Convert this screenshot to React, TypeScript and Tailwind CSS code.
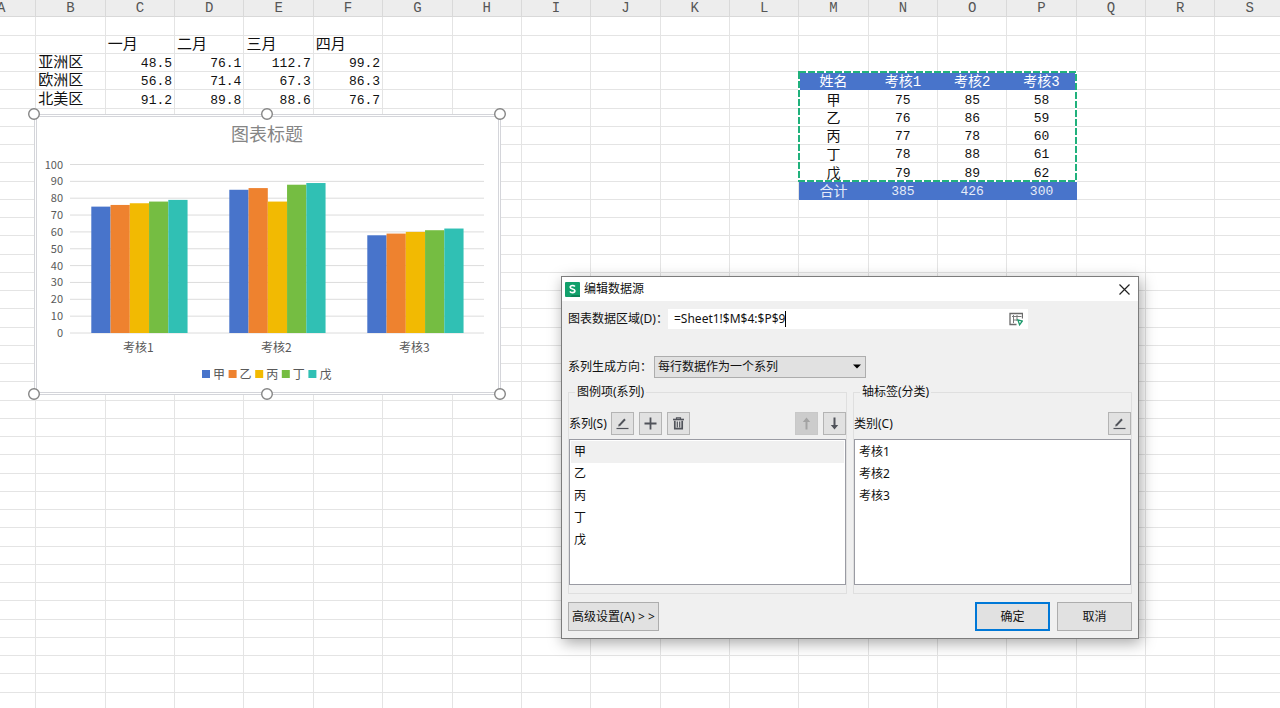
import React from "react";

const COLS = "ABCDEFGHIJKLMNOPQRS".split("");
const ROW_COUNT = 38;

type Kind = "label" | "number" | "head" | "name" | "body" | "totalName" | "total";
type Cell = { text: string; kind: Kind };

const sheet: Record<string, Cell> = {};

function fill(row: number, start: string, texts: string[], kinds: Kind[]) {
  const first = COLS.indexOf(start);
  texts.forEach((text, i) => {
    sheet[COLS[first + i] + row] = { text, kind: kinds[Math.min(i, kinds.length - 1)] };
  });
}

fill(2, "C", ["一月", "二月", "三月", "四月"], ["label"]);
fill(3, "B", ["亚洲区", "48.5", "76.1", "112.7", "99.2"], ["label", "number"]);
fill(4, "B", ["欧洲区", "56.8", "71.4", "67.3", "86.3"], ["label", "number"]);
fill(5, "B", ["北美区", "91.2", "89.8", "88.6", "76.7"], ["label", "number"]);
fill(4, "M", ["姓名", "考核1", "考核2", "考核3"], ["head"]);
fill(5, "M", ["甲", "75", "85", "58"], ["name", "body"]);
fill(6, "M", ["乙", "76", "86", "59"], ["name", "body"]);
fill(7, "M", ["丙", "77", "78", "60"], ["name", "body"]);
fill(8, "M", ["丁", "78", "88", "61"], ["name", "body"]);
fill(9, "M", ["戊", "79", "89", "62"], ["name", "body"]);
fill(10, "M", ["合计", "385", "426", "300"], ["totalName", "total"]);

const cellStyle: Record<Kind, string> = {
  label: "border-[#e4e4e4] pl-[2px] text-left text-[15px] text-[#111]",
  number: "border-[#e4e4e4] pr-[2px] text-right text-[13px] text-[#111]",
  head: "border-[#4874cb] bg-[#4874cb] text-center text-[14px] text-white",
  name: "border-[#e4e4e4] text-center text-[14px] text-[#111]",
  body: "border-[#e4e4e4] text-center text-[13px] text-[#111]",
  totalName: "border-[#4874cb] bg-[#4874cb] text-center text-[14px] text-[#e6ecf8]",
  total: "border-[#4874cb] bg-[#4874cb] text-center text-[13px] text-[#e6ecf8]",
};

function Sheet() {
  return (
    <table className="-ml-[33px] w-[calc(100%+38px)] table-fixed border-separate border-spacing-0 font-['Liberation_Mono','Noto_Sans_CJK_SC',monospace]">
      <thead>
        <tr className="h-[17px]">
          {COLS.map((c) => (
            <th
              key={c}
              scope="col"
              className="border-r border-b border-[#d9d9d9] bg-[#ededed] p-0 text-center text-[14px] leading-[16px] font-normal text-[#555]"
            >
              {c}
            </th>
          ))}
        </tr>
      </thead>
      <tbody>
        {Array.from({ length: ROW_COUNT }, (_, i) => i + 1).map((row) => (
          <tr key={row} className={row % 4 === 1 ? "h-[19px]" : "h-[18px]"}>
            {COLS.map((c) => {
              const cell = sheet[c + row];
              return (
                <td
                  key={c}
                  className={
                    "overflow-hidden border-r border-b p-0 pt-[3px] leading-[14px] whitespace-nowrap " +
                    (cell ? cellStyle[cell.kind] : "border-[#e4e4e4]")
                  }
                >
                  {cell?.text}
                </td>
              );
            })}
          </tr>
        ))}
      </tbody>
    </table>
  );
}

const series = [
  { name: "甲", color: "#4874cb", values: [75, 85, 58] },
  { name: "乙", color: "#ee822f", values: [76, 86, 59] },
  { name: "丙", color: "#f2ba02", values: [77, 78, 60] },
  { name: "丁", color: "#75bd42", values: [78, 88, 61] },
  { name: "戊", color: "#30c0b4", values: [79, 89, 62] },
];
const categories = ["考核1", "考核2", "考核3"];
const ticks = [0, 10, 20, 30, 40, 50, 60, 70, 80, 90, 100];

const BASE = 219;
const UNIT = 1.685;
const BAR = 19.25;

function Chart() {
  return (
    <figure className="absolute top-[114px] left-[34px] h-[281px] w-[467px] border-[3px] border-double border-[#d4d5da] bg-white">
      <svg
        viewBox="0 0 467 281"
        className="absolute -top-[3px] -left-[3px] h-[281px] w-[467px] overflow-visible font-['Noto_Sans_CJK_SC',sans-serif]"
        role="img"
        aria-label="图表标题"
      >
        <text x="233" y="27" textAnchor="middle" className="fill-[#858585] text-[18px]">
          图表标题
        </text>
        {ticks.map((t) => (
          <g key={t}>
            <line x1="36" x2="450" y1={BASE - t * UNIT} y2={BASE - t * UNIT} stroke="#dcdcdc" />
            <text x="29" y={BASE - t * UNIT + 4} textAnchor="end" className="fill-[#595959] text-[11px]">
              {t}
            </text>
          </g>
        ))}
        {categories.map((c, g) => {
          const left = 57.3 + g * 138;
          return (
            <g key={c}>
              {series.map((s, i) => (
                <rect
                  key={s.name}
                  x={left + i * BAR}
                  y={BASE - s.values[g] * UNIT}
                  width={BAR}
                  height={s.values[g] * UNIT}
                  fill={s.color}
                />
              ))}
              <text x={left + 47} y="238" textAnchor="middle" className="fill-[#595959] text-[12px]">
                {c}
              </text>
            </g>
          );
        })}
        {series.map((s, i) => (
          <g key={s.name}>
            <rect x={168 + i * 26.6} y="256" width="8" height="8" fill={s.color} />
            <text x={179 + i * 26.6} y="265" className="fill-[#595959] text-[12px]">
              {s.name}
            </text>
          </g>
        ))}
        {[0, 1].map((r) =>
          [0, 1, 2].map((c) => (
            <circle
              key={`${r}-${c}`}
              cx={c * 233}
              cy={r * 280}
              r="5.3"
              fill="#fff"
              stroke="#858585"
              strokeWidth="1.4"
            />
          )),
        )}
      </svg>
    </figure>
  );
}

function CopyOutline() {
  return (
    <svg className="absolute top-[71px] left-[798px] h-[111px] w-[279px]" viewBox="0 0 279 111" aria-hidden="true">
      <rect x="1" y="1" width="277" height="109" fill="none" stroke="#fff" strokeWidth="2" />
      <rect x="1" y="1" width="277" height="109" fill="none" stroke="#21b17c" strokeWidth="2" strokeDasharray="7 2" />
    </svg>
  );
}

function ToolButton(props: { label: string; disabled?: boolean; children: React.ReactNode }) {
  return (
    <button
      type="button"
      aria-label={props.label}
      disabled={props.disabled}
      className="flex size-[23px] items-center justify-center border border-[#b4b4b4] bg-[#e1e1e1] text-[#50535a] disabled:border-[#c8c8c8] disabled:bg-[#cccccc] disabled:text-[#a3a3a3]"
    >
      {props.children}
    </button>
  );
}

function PencilIcon() {
  return (
    <svg viewBox="0 0 13 13" className="size-[13px]" aria-hidden="true">
      <path d="M0.5 11.500h12" stroke="currentColor" strokeWidth="1.200" />
      <path d="M3.300 8.400 9 2.300" stroke="currentColor" strokeWidth="2" />
      <path d="M2.200 9.600 2.700 7.300 4.400 8.900Z" fill="currentColor" />
    </svg>
  );
}

function ArrowIcon({ up }: { up?: boolean }) {
  return (
    <svg viewBox="0 0 13 13" className="size-[13px]" aria-hidden="true">
      {up ? (
        <path d="M6.5 0.5 10.200 5H7.500v7.500h-2V5H2.800Z" fill="currentColor" />
      ) : (
        <path d="M6.5 12.5 10.200 8H7.500V0.5h-2V8H2.800Z" fill="currentColor" />
      )}
    </svg>
  );
}

function ListBox({ labelledBy, items, selected }: { labelledBy: string; items: string[]; selected?: number }) {
  return (
    <ul
      role="listbox"
      aria-labelledby={labelledBy}
      className="mt-[4px] mb-[8px] flex-1 border border-[#9a9ba3] bg-white p-px"
    >
      {items.map((item, i) => (
        <li
          key={item}
          role="option"
          aria-selected={i === selected}
          className="h-[22px] px-[3px] leading-[22px] aria-selected:bg-[#f0f0f0]"
        >
          {item}
        </li>
      ))}
    </ul>
  );
}

function Dialog() {
  return (
    <section
      role="dialog"
      aria-labelledby="dialog-title"
      className="absolute top-[276px] left-[561px] w-[578px] border border-[#7c7c7c] bg-[#f0f0f0] font-['Noto_Sans','Noto_Sans_CJK_SC',sans-serif] text-[12px] leading-[16px] text-[#111] shadow-[2px_4px_14px_rgba(0,0,0,0.35)]"
    >
      <header className="flex h-[24px] items-center bg-white pr-[8px] pl-[3px]">
        <svg viewBox="0 0 15 15" className="size-[15px]" aria-hidden="true">
          <rect width="15" height="15" rx="1" fill="#12a06b" />
          <path d="M5 15l2-2h8v2Z" fill="#0b8256" />
          <path
            d="M9.9 4.6C9.3 3.8 8.500 3.500 7.500 3.500 6.200 3.500 5.200 4.100 5.200 5.200 5.200 7.500 9.900 6.400 9.900 8.800 9.900 9.900 8.900 10.600 7.500 10.600 6.400 10.600 5.400 10.200 4.900 9.300"
            fill="none"
            stroke="#fff"
            strokeWidth="1.6"
          />
        </svg>
        <h1 id="dialog-title" className="ml-[4px] flex-1">
          编辑数据源
        </h1>
        <button type="button" aria-label="关闭" className="flex size-[12px] items-center justify-center">
          <svg viewBox="0 0 11 11" className="size-[11px]" aria-hidden="true">
            <path d="M0.500 0.500 10.500 10.500M10.500 0.500 0.500 10.500" stroke="#222" strokeWidth="1.200" />
          </svg>
        </button>
      </header>

      <form className="px-[6px] pt-[8px] pb-[7px]" onSubmit={(e) => e.preventDefault()}>
        <div className="flex h-[20px] items-center">
          <label htmlFor="range" className="w-[100px]">
            图表数据区域(D)：
          </label>
          <div className="flex h-full w-[360px] items-center bg-white pr-[5px] pl-[6px]">
            <div className="flex flex-1 items-center">
              <input
                id="range"
                defaultValue="=Sheet1!$M$4:$P$9"
                className="h-[16px] w-[112px] border-r border-black bg-transparent outline-none"
              />
            </div>
            <button type="button" aria-label="选择区域">
              <svg viewBox="0 0 14 14" className="size-[14px]" fill="none" aria-hidden="true">
                <path d="M7.500 12.500H1V1.500h12.500V6.500" stroke="#6a6a6a" strokeWidth="1.300" />
                <path d="M3 4.500h9.500M4.500 3v8M8 3v6M4.500 8H8" stroke="#7a7a7a" />
                <path d="M8.800 7.800 13.300 9 10.600 12.800Z" fill="#fff" stroke="#1d9a6c" strokeWidth="1.300" />
              </svg>
            </button>
          </div>
        </div>

        <div className="mt-[27px] flex h-[22px] items-center">
          <label htmlFor="direction" className="w-[86px]">
            系列生成方向：
          </label>
          <div className="relative h-full w-[212px]">
            <select id="direction" className="h-full w-full appearance-none border border-[#adadad] bg-[#e1e1e1] pl-[3px]">
              <option>每行数据作为一个系列</option>
            </select>
            <svg
              viewBox="0 0 8 5"
              className="pointer-events-none absolute top-[8px] right-[5px] h-[5px] w-[8px]"
              aria-hidden="true"
            >
              <path d="M0 0.500h8L4 4.500Z" fill="#000" />
            </svg>
          </div>
        </div>

        <div className="mt-[6px] flex h-[210px] gap-[6px]">
          <fieldset className="flex min-w-0 flex-1 flex-col border border-[#dfdfdf]">
            <legend className="ml-[6px] px-[2px]">图例项(系列)</legend>
            <div className="mt-[12px] flex h-[23px] items-center gap-[5px]">
              <span id="series-label" className="w-[37px] whitespace-nowrap">
                系列(S)
              </span>
              <ToolButton label="编辑系列">
                <PencilIcon />
              </ToolButton>
              <ToolButton label="添加系列">
                <svg viewBox="0 0 13 13" className="size-[13px]" aria-hidden="true">
                  <path d="M6.500 0.500v12M0.500 6.500h12" stroke="currentColor" strokeWidth="1.800" />
                </svg>
              </ToolButton>
              <ToolButton label="删除系列">
                <svg viewBox="0 0 13 13" className="size-[13px]" fill="none" stroke="currentColor" aria-hidden="true">
                  <path d="M1 2.500h11" strokeWidth="1.600" />
                  <path d="M4.500 2V0.800h4V2" strokeWidth="1.200" />
                  <path d="M2.800 3.800V11.600h7.400V3.800" strokeWidth="1.700" />
                  <path d="M5.300 4.500v6M7.700 4.500v6" strokeWidth="1.200" />
                </svg>
              </ToolButton>
              <span className="flex-1" />
              <ToolButton label="上移" disabled>
                <ArrowIcon up />
              </ToolButton>
              <ToolButton label="下移">
                <ArrowIcon />
              </ToolButton>
            </div>
            <ListBox labelledBy="series-label" items={["甲", "乙", "丙", "丁", "戊"]} selected={0} />
          </fieldset>
          <fieldset className="flex min-w-0 flex-1 flex-col border border-[#dfdfdf]">
            <legend className="ml-[6px] px-[2px]">轴标签(分类)</legend>
            <div className="mt-[12px] flex h-[23px] items-center justify-between">
              <span id="category-label">类别(C)</span>
              <ToolButton label="编辑类别">
                <PencilIcon />
              </ToolButton>
            </div>
            <ListBox labelledBy="category-label" items={categories} />
          </fieldset>
        </div>

        <div className="mt-[8px] flex h-[29px] gap-[7px]">
          <button type="button" className="mr-auto w-[91px] border border-[#adadad] bg-[#e1e1e1] whitespace-nowrap">
            高级设置(A) &gt; &gt;
          </button>
          <button type="submit" className="w-[75px] border-2 border-[#0078d7] bg-[#e1e1e1]">
            确定
          </button>
          <button type="button" className="w-[75px] border border-[#adadad] bg-[#e1e1e1]">
            取消
          </button>
        </div>
      </form>
    </section>
  );
}

export default function App() {
  return (
    <main className="relative h-screen overflow-hidden bg-white">
      <Sheet />
      <CopyOutline />
      <Chart />
      <Dialog />
    </main>
  );
}
